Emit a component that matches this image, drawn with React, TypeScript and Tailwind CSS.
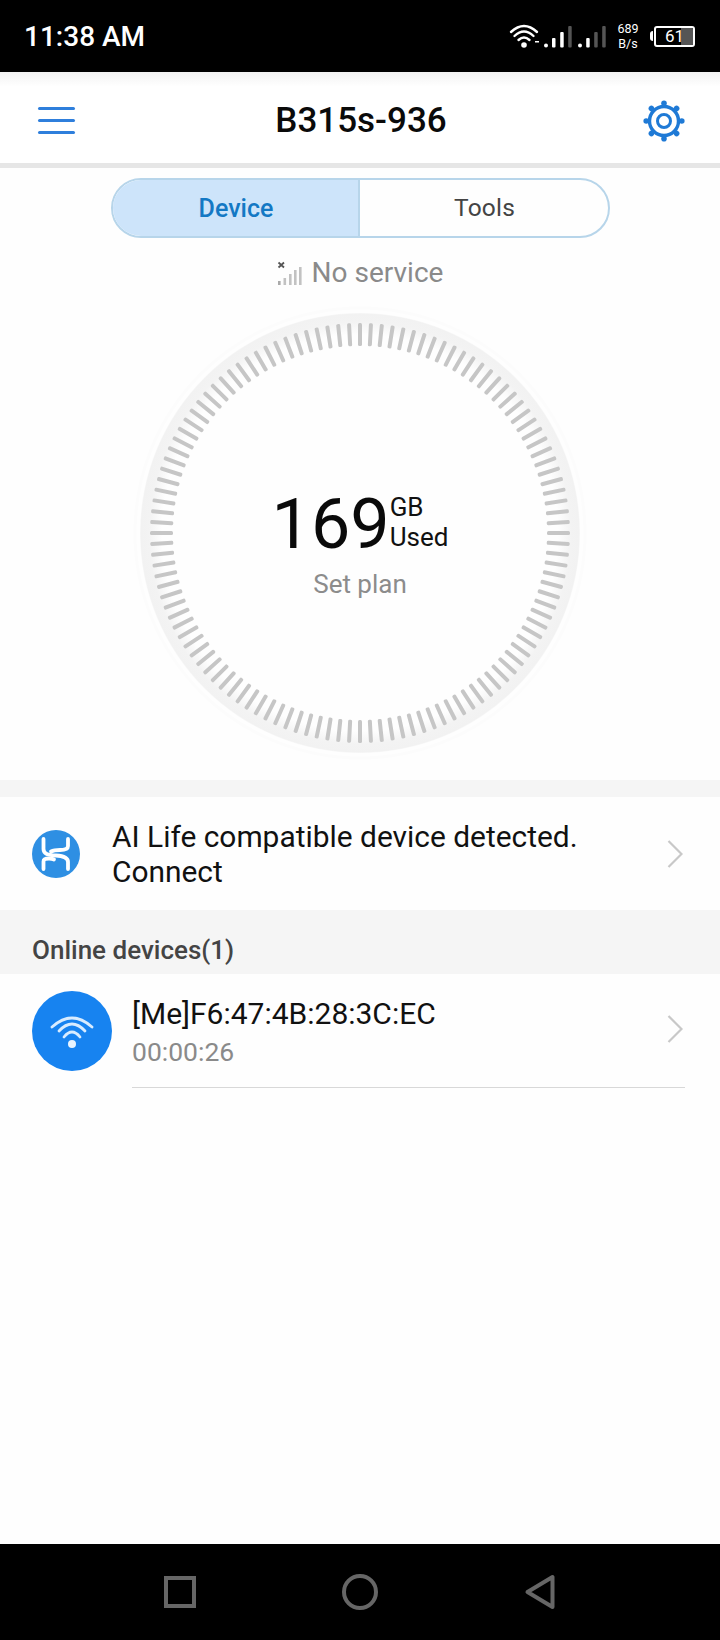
const ticks = Array.from({ length: 120 }, (_, i) => i * 3);

function StatusIcons() {
  return (
    <svg width="100" height="30" viewBox="0 0 100 30" className="shrink-0 overflow-visible">
      {/* wifi */}
      <g fill="none" stroke="#fff" strokeWidth="2.4" strokeLinecap="round">
        <path d="M6 11 Q19 -1 32 11" />
        <path d="M9.5 15 Q19 6 28.5 15" />
        <path d="M13.5 19 Q19 14 24.5 19" />
      </g>
      <circle cx="19" cy="24" r="2.8" fill="#fff" />
      <rect x="30" y="20" width="4" height="1.5" fill="#fff" />
      {/* sim 1 */}
      <circle cx="41" cy="24.5" r="2" fill="#fff" />
      <rect x="47" y="17" width="3.5" height="9.5" rx="1" fill="#fff" />
      <rect x="55.2" y="11" width="3.5" height="15.5" rx="1" fill="#fff" />
      <rect x="63.2" y="5" width="3.5" height="21.5" rx="1" fill="#555" />
      {/* sim 2 */}
      <circle cx="75" cy="24.5" r="2" fill="#fff" />
      <rect x="81.2" y="17" width="3.5" height="9.5" rx="1" fill="#fff" />
      <rect x="89.2" y="11" width="3.5" height="15.5" rx="1" fill="#555" />
      <rect x="97.2" y="5" width="3.5" height="21.5" rx="1" fill="#555" />
    </svg>
  );
}

function Gear() {
  const knobs = [0, 45, 90, 135, 180, 225, 270, 315];
  return (
    <svg width="42" height="42" viewBox="0 0 42 42">
      <circle cx="21" cy="21" r="14.5" fill="none" stroke="#1f7ad6" strokeWidth="3.4" />
      <circle cx="21" cy="21" r="6.5" fill="none" stroke="#1f7ad6" strokeWidth="3" />
      {knobs.map((a) => (
        <circle key={a} cx="21" cy="3.2" r="2.8" fill="#1f7ad6" transform={`rotate(${a} 21 21)`} />
      ))}
      {knobs.map((a) => (
        <rect key={a} x="19.5" y="3" width="3" height="4" fill="#1f7ad6" transform={`rotate(${a} 21 21)`} />
      ))}
    </svg>
  );
}

function NoSignal() {
  return (
    <svg width="25" height="25" viewBox="0 0 25 25">
      <path d="M1.5 1.5 L7 6.5 M7 1.5 L1.5 6.5" stroke="#555" strokeWidth="1.8" />
      <rect x="1" y="20" width="2.6" height="4" fill="#aaa" />
      <rect x="6.5" y="17" width="2.6" height="7" fill="#c2c2c2" />
      <rect x="12" y="13" width="2.6" height="11" fill="#c2c2c2" />
      <rect x="17" y="9" width="2.6" height="15" fill="#c2c2c2" />
      <rect x="22" y="6" width="2.6" height="18" fill="#c2c2c2" />
    </svg>
  );
}

function Dial() {
  return (
    <svg width="470" height="470" viewBox="0 0 470 470" className="absolute left-0 top-0">
      <defs>
        <radialGradient id="band" gradientUnits="userSpaceOnUse" cx="235" cy="235" r="220">
          <stop offset="0.9" stopColor="#fefefe" />
          <stop offset="0.96" stopColor="#f3f3f3" />
          <stop offset="0.995" stopColor="#f2f2f2" />
          <stop offset="1" stopColor="#f8f8f8" />
        </radialGradient>
      </defs>
      <circle cx="235" cy="235" r="225" fill="none" stroke="#fcfcfc" strokeWidth="3" />
      <circle cx="235" cy="235" r="220" fill="url(#band)" />
      {ticks.map((a) => (
        <rect key={a} x="233" y="25" width="4" height="23" rx="1.5" fill="#c6c6c6" transform={`rotate(${a} 235 235)`} />
      ))}
    </svg>
  );
}

function HLogo() {
  return (
    <svg width="48" height="48" viewBox="0 0 48 48" className="shrink-0">
      <circle cx="24" cy="24" r="24" fill="#2e8fe3" />
      <g fill="none" stroke="#fff" strokeWidth="3.8" strokeLinecap="round">
        <path d="M11.5 9 V19 C11.5 24 16 25 24 25.5 C32 26 36 28 36 32 V39" />
        <path d="M36 9 V16 C36 19 33 20 28 20 C24 20 21 20.5 19 21.5" />
        <path d="M11.5 39 V31.5 C11.5 29.5 13 28.5 17 28.5 C19 28.5 21 29 22 29.5" />
      </g>
    </svg>
  );
}

function WifiBadge() {
  return (
    <div className="flex h-20 w-20 shrink-0 items-center justify-center rounded-full bg-[#1783f0]">
      <svg width="44" height="40" viewBox="0 0 44 40">
        <g fill="none" stroke="#d8ecff" strokeLinecap="round" strokeWidth="2.8">
          <path d="M2 16 Q22 -2 42 16" />
          <path d="M9 20 Q22 6 35 20" />
          <path d="M14 26 Q22 16 30 26" />
        </g>
        <circle cx="22" cy="33" r="4" fill="#e8f4ff" />
      </svg>
    </div>
  );
}

function Chevron() {
  return (
    <svg width="16" height="28" viewBox="0 0 16 28" className="shrink-0">
      <path d="M1.5 1 L14.5 14 L1.5 27" fill="none" stroke="#c8c8c8" strokeWidth="2.2" />
    </svg>
  );
}

export default function App() {
  return (
    <div className="flex h-[1640px] w-[720px] flex-col overflow-hidden bg-[#fefefe] font-['Roboto',sans-serif]">
      {/* status bar */}
      <div className="flex h-[72px] shrink-0 items-center bg-black pl-[24px] text-white">
        <span className="mt-px text-[28px] font-medium leading-none">11:38 AM</span>
        <div className="ml-auto mr-[25px] flex items-center">
          <StatusIcons />
          <div className="ml-[11px] w-[24px] text-center text-[12.5px] leading-[15px]">
            <div>689</div>
            <div>B/s</div>
          </div>
          <div className="ml-[10px] h-[10px] w-[3px] rounded-l-sm bg-white" />
          <div className="relative ml-px flex h-[21px] w-[41px] items-center justify-center overflow-hidden rounded-[3px] border-2 border-white text-[17px] leading-none">
            <div className="absolute bottom-0 right-0 top-0 w-[12px] bg-[#555]" />
            <span className="relative">61</span>
          </div>
        </div>
      </div>

      {/* header */}
      <div className="flex h-[96px] shrink-0 items-center justify-between border-b-[5px] border-[#e6e6e6] bg-gradient-to-b from-[#f2f2f2] via-white via-[16%] to-white pl-[38px] pr-[35px] pt-[6px]">
        <div className="flex w-[37px] flex-col gap-[9px]">
          <div className="h-[3px] rounded-full bg-[#2f7fdc]" />
          <div className="h-[3px] rounded-full bg-[#2f7fdc]" />
          <div className="h-[3px] rounded-full bg-[#2f7fdc]" />
        </div>
        <span className="ml-[4px] text-[35px] font-medium leading-none text-[#0a0a0a]">B315s-936</span>
        <Gear />
      </div>

      {/* tabs */}
      <div className="mx-auto mt-[10px] flex h-[60px] w-[499px] shrink-0 overflow-hidden rounded-full border-2 border-[#b7d5ea]">
        <div className="flex w-[247px] items-center justify-center border-r-2 border-[#b7d5ea] bg-[#cde4fa] pl-[2px] pt-px text-[25px] font-medium text-[#1378c4]">
          Device
        </div>
        <div className="flex flex-1 items-center justify-center pl-[2px] pt-px text-[24.5px] tracking-[0.2px] text-[#444]">Tools</div>
      </div>

      <div className="mt-[15px] flex h-[40px] shrink-0 items-center justify-center gap-[10px]">
        <NoSignal />
        <span className="text-[28px] leading-none text-[#8a8a8a]">No service</span>
      </div>

      {/* usage dial */}
      <div className="relative mx-auto mt-[5px] flex h-[470px] w-[470px] shrink-0 flex-col items-center justify-center pt-[20px]">
        <Dial />
        <div className="relative flex items-start">
          <span className="text-[70px] leading-[80px] text-[#0a0a0a]">169</span>
          <div className="mt-[8px] text-[26px] leading-[30px] text-[#111]">
            <div>GB</div>
            <div>Used</div>
          </div>
        </div>
        <span className="relative mt-[2px] text-[26px] leading-[36px] text-[#8c8c8c]">Set plan</span>
      </div>

      <div className="mt-[12px] h-[17px] shrink-0 bg-[#f5f5f5]" />

      {/* AI Life row */}
      <div className="flex h-[113px] shrink-0 items-center pl-[32px] pr-[37px]">
        <HLogo />
        <div className="ml-[32px] flex-1 text-[29.9px] leading-[35px] text-[#111]">
          AI Life compatible device detected.
          <br />
          Connect
        </div>
        <Chevron />
      </div>

      <div className="flex h-[64px] shrink-0 items-end bg-[#f5f5f5] pb-[6px] pl-[32px] text-[26px] font-medium leading-[36px] text-[#444]">
        Online devices(1)
      </div>

      {/* device row */}
      <div className="flex shrink-0 pl-[32px] pr-[35px] pt-[17px]">
        <WifiBadge />
        <div className="ml-[20px] flex-1 border-b border-[#d8d8d8] pb-[16px]">
          <div className="flex items-center justify-between pr-[2px]">
            <div className="pt-[3px]">
              <div className="text-[30px] leading-[39px] text-[#111]">[Me]F6:47:4B:28:3C:EC</div>
              <div className="text-[26.5px] leading-[38px] text-[#8a8a8a]">00:00:26</div>
            </div>
            <div className="mb-[4px]">
              <Chevron />
            </div>
          </div>
        </div>
      </div>

      <div className="flex-1" />

      {/* nav bar */}
      <div className="grid h-[96px] shrink-0 grid-cols-3 bg-black px-[90px]">
        <div className="flex items-center justify-center">
          <div className="h-[32px] w-[32px] border-[4px] border-[#666]" />
        </div>
        <div className="flex items-center justify-center">
          <div className="h-[36px] w-[36px] rounded-full border-[4px] border-[#666]" />
        </div>
        <div className="flex items-center justify-center">
          <svg width="32" height="36" viewBox="0 0 32 36">
            <path d="M28.5 3 V33 L3.5 18 Z" fill="none" stroke="#666" strokeWidth="4" strokeLinejoin="round" />
          </svg>
        </div>
      </div>
    </div>
  );
}
